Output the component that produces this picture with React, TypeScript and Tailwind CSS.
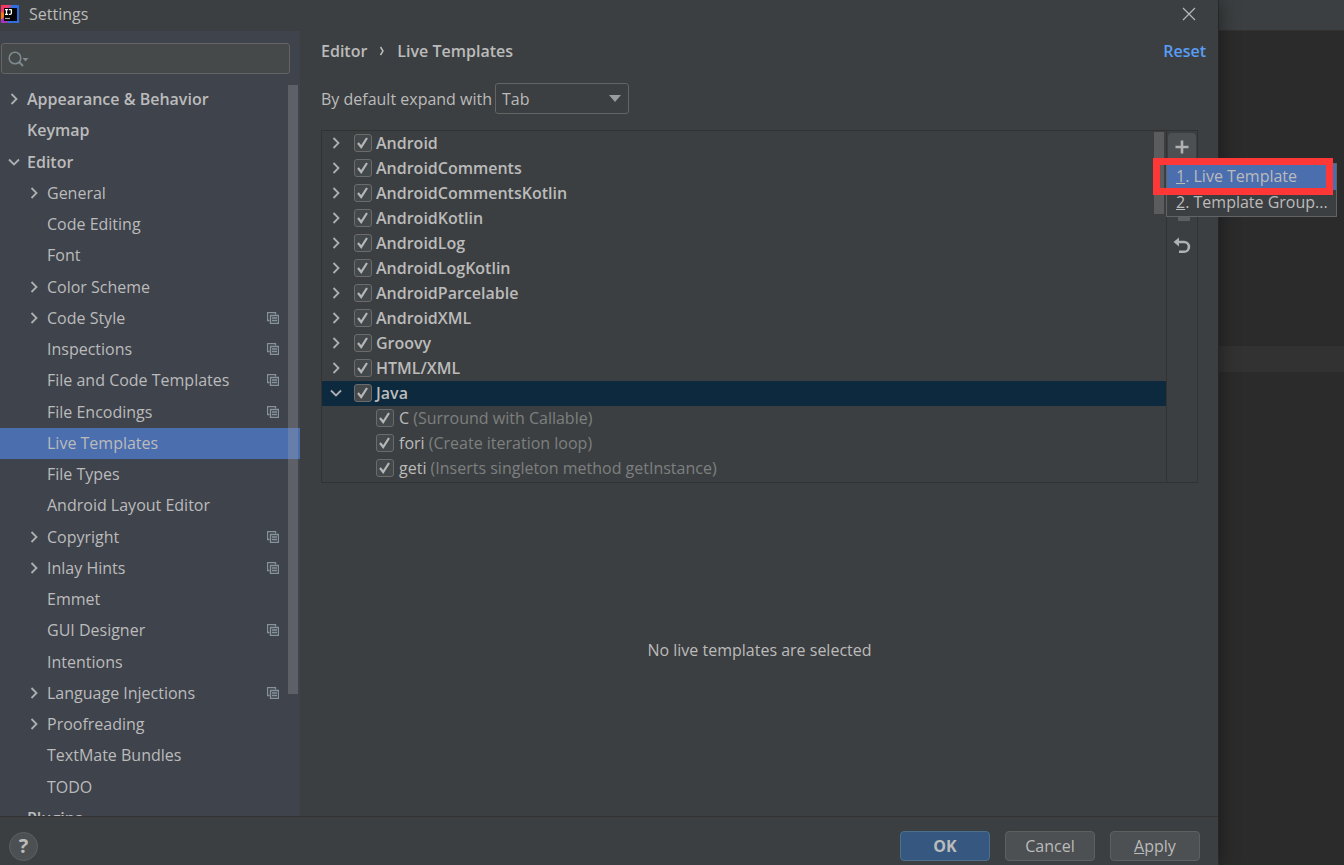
import { useState } from "react";
import type { ReactNode } from "react";

type NavItem = {
  label: string;
  level: 0 | 1;
  state?: "open" | "closed";
  project?: boolean;
};

const navItems: NavItem[] = [
  { label: "Appearance & Behavior", level: 0, state: "closed" },
  { label: "Keymap", level: 0 },
  { label: "Editor", level: 0, state: "open" },
  { label: "General", level: 1, state: "closed" },
  { label: "Code Editing", level: 1 },
  { label: "Font", level: 1 },
  { label: "Color Scheme", level: 1, state: "closed" },
  { label: "Code Style", level: 1, state: "closed", project: true },
  { label: "Inspections", level: 1, project: true },
  { label: "File and Code Templates", level: 1, project: true },
  { label: "File Encodings", level: 1, project: true },
  { label: "Live Templates", level: 1 },
  { label: "File Types", level: 1 },
  { label: "Android Layout Editor", level: 1 },
  { label: "Copyright", level: 1, state: "closed", project: true },
  { label: "Inlay Hints", level: 1, state: "closed", project: true },
  { label: "Emmet", level: 1 },
  { label: "GUI Designer", level: 1, project: true },
  { label: "Intentions", level: 1 },
  { label: "Language Injections", level: 1, state: "closed", project: true },
  { label: "Proofreading", level: 1, state: "closed" },
  { label: "TextMate Bundles", level: 1 },
  { label: "TODO", level: 1 },
  { label: "Plugins", level: 0 },
];

const groups = [
  "Android",
  "AndroidComments",
  "AndroidCommentsKotlin",
  "AndroidKotlin",
  "AndroidLog",
  "AndroidLogKotlin",
  "AndroidParcelable",
  "AndroidXML",
  "Groovy",
  "HTML/XML",
  "Java",
];

const javaTemplates = [
  { key: "C", description: "(Surround with Callable)" },
  { key: "fori", description: "(Create iteration loop)" },
  { key: "geti", description: "(Inserts singleton method getInstance)" },
];

function Arrow({ open }: { open?: boolean }) {
  return (
    <svg viewBox="0 0 14 14" className="size-[14px] shrink-0" fill="none" stroke="#adb0b2" strokeWidth="1.8">
      <path d={open ? "M2 4.5l5 5 5-5" : "M4.5 2l5 5-5 5"} />
    </svg>
  );
}

function Logo() {
  return (
    <svg viewBox="0 0 18 18" className="ml-px size-[18px] shrink-0">
      <defs>
        <linearGradient id="logo" x1="0" y1="0" x2="1" y2="0.3">
          <stop offset="0" stopColor="#fe315d" />
          <stop offset="0.4" stopColor="#e8406f" />
          <stop offset="0.6" stopColor="#2f6fe0" />
          <stop offset="1" stopColor="#2a6be2" />
        </linearGradient>
      </defs>
      <rect width="18" height="18" fill="url(#logo)" />
      <path d="M0 7l3 1v5l-3 2z" fill="#f97a12" />
      <path d="M0 15l3-3 5 6H0z" fill="#a137b8" />
      <path d="M6 15h12v3H8z" fill="#2f6fe0" />
      <rect x="3" y="3" width="13" height="13" fill="#050505" />
      <path d="M4 4.700h3M5.500 4.700v4.600M4 9.300h3M7.800 4.700h3M10.400 4.700v3.400q0 1.200-1.200 1.200h-1.400" fill="none" stroke="#fff" strokeWidth="1.3" />
      <path d="M4 13.500h5" stroke="#aaa" strokeWidth="1.2" />
    </svg>
  );
}

function ProjectIcon() {
  return (
    <svg viewBox="0 0 12 12" className="size-3 shrink-0" fill="none" stroke="#87939a">
      <path d="M2.500 8.500H.5v-8h8v2" strokeWidth="1.300" />
      <path d="M3.500 3.500h8v8h-8z" strokeWidth="1.400" />
      <path d="M5 6h5M5 8.500h5" strokeWidth="1.300" />
    </svg>
  );
}

function Check({ label }: { label: string }) {
  return (
    <span className="relative flex size-[18px] shrink-0">
      <input
        type="checkbox"
        defaultChecked
        aria-label={label}
        className="peer size-[18px] appearance-none rounded-[3px] border border-[#6b6b6b] bg-[#43494a]"
      />
      <svg
        viewBox="0 0 18 18"
        className="pointer-events-none absolute inset-0 hidden peer-checked:block"
        fill="none"
        stroke="#b4b6b7"
        strokeWidth="2.2"
      >
        <path d="M4 9l3.200 4L13 4" />
      </svg>
    </span>
  );
}

function ToolButton({ label, active, children }: { label: string; active?: boolean; children: ReactNode }) {
  return (
    <button
      aria-label={label}
      className={
        active
          ? "flex size-7 items-center justify-center rounded-[4px] bg-[#4c5052]"
          : "flex size-7 items-center justify-center rounded-[4px]"
      }
    >
      {children}
    </button>
  );
}

function Sidebar() {
  const [selected, setSelected] = useState("Live Templates");

  return (
    <aside className="flex w-[300px] shrink-0 flex-col bg-[#3f434c] pt-3">
      <div className="relative ml-px mr-[10px]">
        <input
          type="text"
          aria-label="Search settings"
          className="block h-[31px] w-full rounded-[3px] border border-[#646464] bg-[#45494a] pl-8 outline-none"
        />
        <svg viewBox="0 0 22 16" className="absolute left-[7px] top-2 h-4 w-[22px]" fill="none" stroke="#7d8b91" strokeWidth="1.5">
          <circle cx="7" cy="7" r="5.800" />
          <path d="M11 11l4 4" strokeWidth="2" />
          <path d="M14.500 7h6l-3 3.500z" fill="#7d8b91" stroke="none" />
        </svg>
      </div>
      <div className="relative mt-[10px] min-h-0 flex-1 overflow-hidden">
        <nav className="grid h-[750px] auto-rows-fr">
          {navItems.map((item) => (
            <button
              key={item.label}
              onClick={() => setSelected(item.label)}
              className={`flex items-center pb-px text-left ${item.level === 0 ? "pl-[7px] font-semibold" : "pl-[27px]"} ${
                item.label === selected ? "bg-[#4b6eaf]" : ""
              }`}
            >
              <span className="w-5 shrink-0">{item.state && <Arrow open={item.state === "open"} />}</span>
              <span className="flex-1">{item.label}</span>
              {item.project && (
                <span className="mr-[21px]">
                  <ProjectIcon />
                </span>
              )}
            </button>
          ))}
        </nav>
        <div className="absolute right-[2px] top-px h-[609px] w-[10px] bg-[#a6a6a6]/30" />
      </div>
    </aside>
  );
}

function AddMenu() {
  return (
    <div className="absolute -left-px top-8 z-10 w-[171px] border border-[#616365] bg-[#3c3f41]">
      <button className="block h-[26px] w-full bg-[#4b6eaf] pb-[2px] pl-[9px] text-left">
        <u>1</u>. Live Template
      </button>
      <button className="block h-[26px] w-full pb-[2px] pl-[9px] text-left">
        <u>2</u>. Template Group...
      </button>
      <div className="pointer-events-none absolute -left-[14px] -top-[6px] h-[37px] w-[180px] border-[7px] border-[#ff3737]" />
    </div>
  );
}

function TemplateList() {
  return (
    <div className="relative flex border border-[#323232]">
      <div className="relative min-w-0 flex-1 pb-px">
        <ul>
          {groups.map((name) => (
            <li
              key={name}
              className={`flex h-[25px] items-center pb-px pl-[7px] font-semibold ${name === "Java" ? "bg-[#0d293e]" : ""}`}
            >
              <Arrow open={name === "Java"} />
              <span className="ml-[11px] mr-1 flex">
                <Check label={name} />
              </span>
              {name}
            </li>
          ))}
          {javaTemplates.map((template) => (
            <li key={template.key} className="flex h-[25px] items-center pb-px pl-[54px]">
              <Check label={template.key} />
              <span className="ml-[5px]">
                {template.key} <span className="text-[#7d7f80]">{template.description}</span>
              </span>
            </li>
          ))}
        </ul>
        <div className="absolute right-[2px] top-px h-[82px] w-[10px] bg-[#5a5c5d]" />
      </div>
      <div className="relative flex w-[31px] flex-col items-center gap-[5px] border-l border-[#323232] pt-[2px]">
        <ToolButton label="Add" active>
          <svg viewBox="0 0 14 14" className="size-[14px]" stroke="#afb1b3" strokeWidth="2.600">
            <path d="M7 .5v13M.5 7h13" />
          </svg>
        </ToolButton>
        <ToolButton label="Remove">
          <svg viewBox="0 0 14 14" className="size-[14px]" stroke="#6a6c6e" strokeWidth="2.600">
            <path d="M.5 7h13" />
          </svg>
        </ToolButton>
        <ToolButton label="Duplicate">
          <svg viewBox="0 0 16 16" className="size-4" fill="#5c5e60">
            <path d="M2 0h9v2H4v9H2z" />
            <path d="M4 4h12v12H4z" />
          </svg>
        </ToolButton>
        <ToolButton label="Restore defaults">
          <svg viewBox="0 0 18 18" className="size-[18px]">
            <path d="M5 5h6a4.900 4.900 0 0 1 0 9.800H6" fill="none" stroke="#afb1b3" strokeWidth="2.600" />
            <path d="M.5 5L6 .5v9z" fill="#afb1b3" />
          </svg>
        </ToolButton>
        <AddMenu />
      </div>
    </div>
  );
}

function Content() {
  return (
    <main className="flex min-w-0 flex-1 flex-col pl-[21px] pr-[20px]">
      <div className="-mr-2 flex items-center pt-2 font-semibold">
        <span>Editor</span>
        <svg viewBox="0 0 6 10" className="mx-3 h-[10px] w-[6px]" fill="none" stroke="#bbb" strokeWidth="1.500">
          <path d="M1.500 1L4 5 1.500 9" />
        </svg>
        <h1 className="flex-1">Live Templates</h1>
        <a href="#reset" className="text-[#589df6]">
          Reset
        </a>
      </div>
      <div className="mt-5 flex items-center gap-[3px]">
        <label htmlFor="expand">By default expand with</label>
        <div className="relative">
          <select
            id="expand"
            className="block h-[31px] w-[134px] appearance-none rounded-[3px] border border-[#646464] bg-[#3c3f41] pl-[6px] outline-none"
          >
            <option>Tab</option>
            <option>Enter</option>
            <option>Space</option>
          </select>
          <svg viewBox="0 0 12 7" className="pointer-events-none absolute right-2 top-3 h-[7px] w-3" fill="#9a9da0">
            <path d="M0 0h12L6 7z" />
          </svg>
        </div>
      </div>
      <div className="mt-4">
        <TemplateList />
      </div>
      <div className="flex flex-1 items-center justify-center">No live templates are selected</div>
    </main>
  );
}

function Footer() {
  return (
    <footer className="flex h-[49px] shrink-0 items-center gap-[15px] border-t border-[#323232] pl-[9px] pr-[18px] pt-[10px]">
      <button
        aria-label="Help"
        className="mr-auto flex size-[29px] items-center justify-center rounded-full border border-[#5e6060] bg-[#4c5052] text-xl font-bold"
      >
        ?
      </button>
      <button className="h-[30px] w-[90px] rounded-[4px] border border-[#4c708c] bg-[#365880] font-bold">OK</button>
      <button className="h-[30px] w-[90px] rounded-[4px] border border-[#5e6060] bg-[#4c5052]">Cancel</button>
      <button className="h-[30px] w-[90px] rounded-[4px] border border-[#5e6060] bg-[#4c5052]">
        <u>A</u>pply
      </button>
    </footer>
  );
}

function App() {
  return (
    <div className="flex h-screen min-h-[560px] overflow-hidden bg-[#2b2b2b] font-['Open_Sans','Noto_Sans',sans-serif] text-base/[24px] text-[#bbbbbb]">
      <div className="relative z-10 flex min-w-0 flex-1 flex-col bg-[#3c3f41] shadow-[2px_0_18px_rgba(0,0,0,0.4)]">
        <header className="flex h-[31px] shrink-0 items-center pb-[3px]">
          <Logo />
          <span className="ml-[10px] flex-1">Settings</span>
          <button aria-label="Close" className="mr-[22px]">
            <svg viewBox="0 0 14 14" className="size-[14px]" stroke="#b5b7b8" strokeWidth="1.200">
              <path d="M1 1l12 12M13 1L1 13" />
            </svg>
          </button>
        </header>
        <div className="flex min-h-0 flex-1">
          <Sidebar />
          <Content />
        </div>
        <Footer />
      </div>
      <div className="w-[126px] shrink-0 border-l border-[#323232]">
        <div className="h-[31px] border-b border-[#323232] bg-[#3c3f41]" />
        <div className="mt-[315px] h-[26px] bg-[#323232]" />
      </div>
    </div>
  );
}

export default App;
